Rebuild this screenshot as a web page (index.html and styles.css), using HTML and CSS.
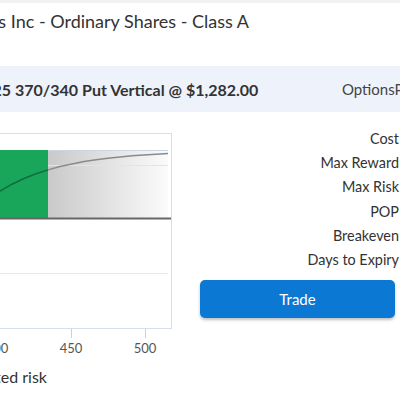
FILE: index.html
```html
<!DOCTYPE html>
<html>
<head>
<meta charset="utf-8">
<link rel="stylesheet" href="styles.css">
</head>
<body>
<div class="topbar"></div>
<h1 class="title">Meta Platforms Inc - Ordinary Shares - Class A</h1>
<div class="band">
  <span class="trade-name">Sell META Jan 17 2025 370/340 Put Vertical @ $1,282.00</span>
  <span class="provider">OptionsPlay</span>
</div>
<div class="main">
  <div class="chart">
    <svg width="300" height="230" viewBox="0 0 300 230">
      <defs>
        <linearGradient id="g" x1="0" x2="1" y1="0" y2="0">
          <stop offset="0" stop-color="#c9c9c9"/>
          <stop offset="1" stop-color="#fbfbfb"/>
        </linearGradient>
      </defs>
      <rect x="0.5" y="0.5" width="299" height="195" fill="#fff" stroke="#d6dee9"/>
      <rect x="176" y="17" width="120" height="69" fill="url(#g)"/>
      <rect x="40" y="17" width="136" height="69" fill="#19a65a"/>
      <line x1="176" y1="17.5" x2="296" y2="17.5" stroke="#c9d6e4"/>
      <line x1="176" y1="32.5" x2="296" y2="32.5" stroke="#e4e4e4"/>
      <line x1="1" y1="140.5" x2="296" y2="140.5" stroke="#e8e8e8"/>
      <line x1="1" y1="85.5" x2="299" y2="85.5" stroke="#666" stroke-width="2"/>
      <polyline fill="none" stroke="#0f6e3c" stroke-width="1.5" points="104,76.1 116,66.2 128,58 140,51.2 152,45.5 164,40.8 176,36.9"/>
      <polyline fill="none" stroke="#8a8a8a" stroke-width="1.5" points="176,36.9 188,33.6 200,30.9 212,28.6 224,26.7 236,25.2 248,23.9 260,22.8 272,21.9 284,21.2 296,20.6"/>
      <g stroke="#cfcfcf">
        <line x1="125.5" y1="196" x2="125.5" y2="205"/>
        <line x1="199.5" y1="196" x2="199.5" y2="205"/>
        <line x1="273.5" y1="196" x2="273.5" y2="205"/>
      </g>
      <g class="ticks" text-anchor="middle">
        <text x="125" y="220">400</text>
        <text x="199" y="220">450</text>
        <text x="273" y="220">500</text>
      </g>
    </svg>
  </div>
  <div class="stats">
    <dl class="rows">
      <dt>Cost</dt><dd>$1,282.00</dd>
      <dt>Max Reward</dt><dd>$1,718.00</dd>
      <dt>Max Risk</dt><dd>$1,282.00</dd>
      <dt>POP</dt><dd>42%</dd>
      <dt>Breakeven</dt><dd>$357.18</dd>
      <dt>Days to Expiry</dt><dd>45</dd>
    </dl>
    <button class="trade-btn">Trade</button>
  </div>
</div>
<p class="note">Limited risk</p>
</body>
</html>
```

FILE: styles.css
```css
html, body {
  margin: 0;
  padding: 0;
  background: #fff;
  overflow: hidden;
}
body {
  width: 400px;
  height: 400px;
  font-family: Lato, "Open Sans", sans-serif;
  color: #333;
}
.topbar {
  height: 3px;
  background: #f2f2f4;
}
.title {
  margin: 6px 0 0 -115px;
  font-size: 18px;
  line-height: 24px;
  font-weight: 400;
  white-space: nowrap;
  color: #333;
}
.band {
  margin-top: 33px;
  height: 46px;
  background: #eef2fb;
  display: flex;
  align-items: center;
  justify-content: space-between;
  margin-left: -152px;
  margin-right: -22px;
  white-space: nowrap;
}
.trade-name {
  font-weight: 700;
  font-size: 16px;
  color: #333;
}
.provider {
  font-size: 15px;
  color: #444;
}
.main {
  display: flex;
  margin-top: 21px;
}
.chart {
  margin-left: -128px;
  flex: none;
}
.chart svg {
  display: block;
}
.ticks {
  font-family: Lato, sans-serif;
  font-size: 13px;
  fill: #555;
}
.stats {
  margin-left: 28px;
  flex: none;
  width: 195px;
}
.rows {
  margin: -6px -60px 0 0;
  display: grid;
  grid-template-columns: 1fr 56px;
  font-size: 14.4px;
  line-height: 24.2px;
}
.rows dt {
  text-align: right;
}
.rows dd {
  margin: 0;
  padding-left: 8px;
}
.trade-btn {
  display: block;
  width: 195px;
  height: 38px;
  margin-top: 8px;
  border: 0;
  border-radius: 5px;
  background: #0b79d4;
  color: #fff;
  font-family: Lato, sans-serif;
  font-size: 15px;
  box-shadow: 0 2px 3px rgba(0,0,0,0.25);
}
.note {
  margin: 4px 0 0 -34px;
  font-size: 16px;
}
```
